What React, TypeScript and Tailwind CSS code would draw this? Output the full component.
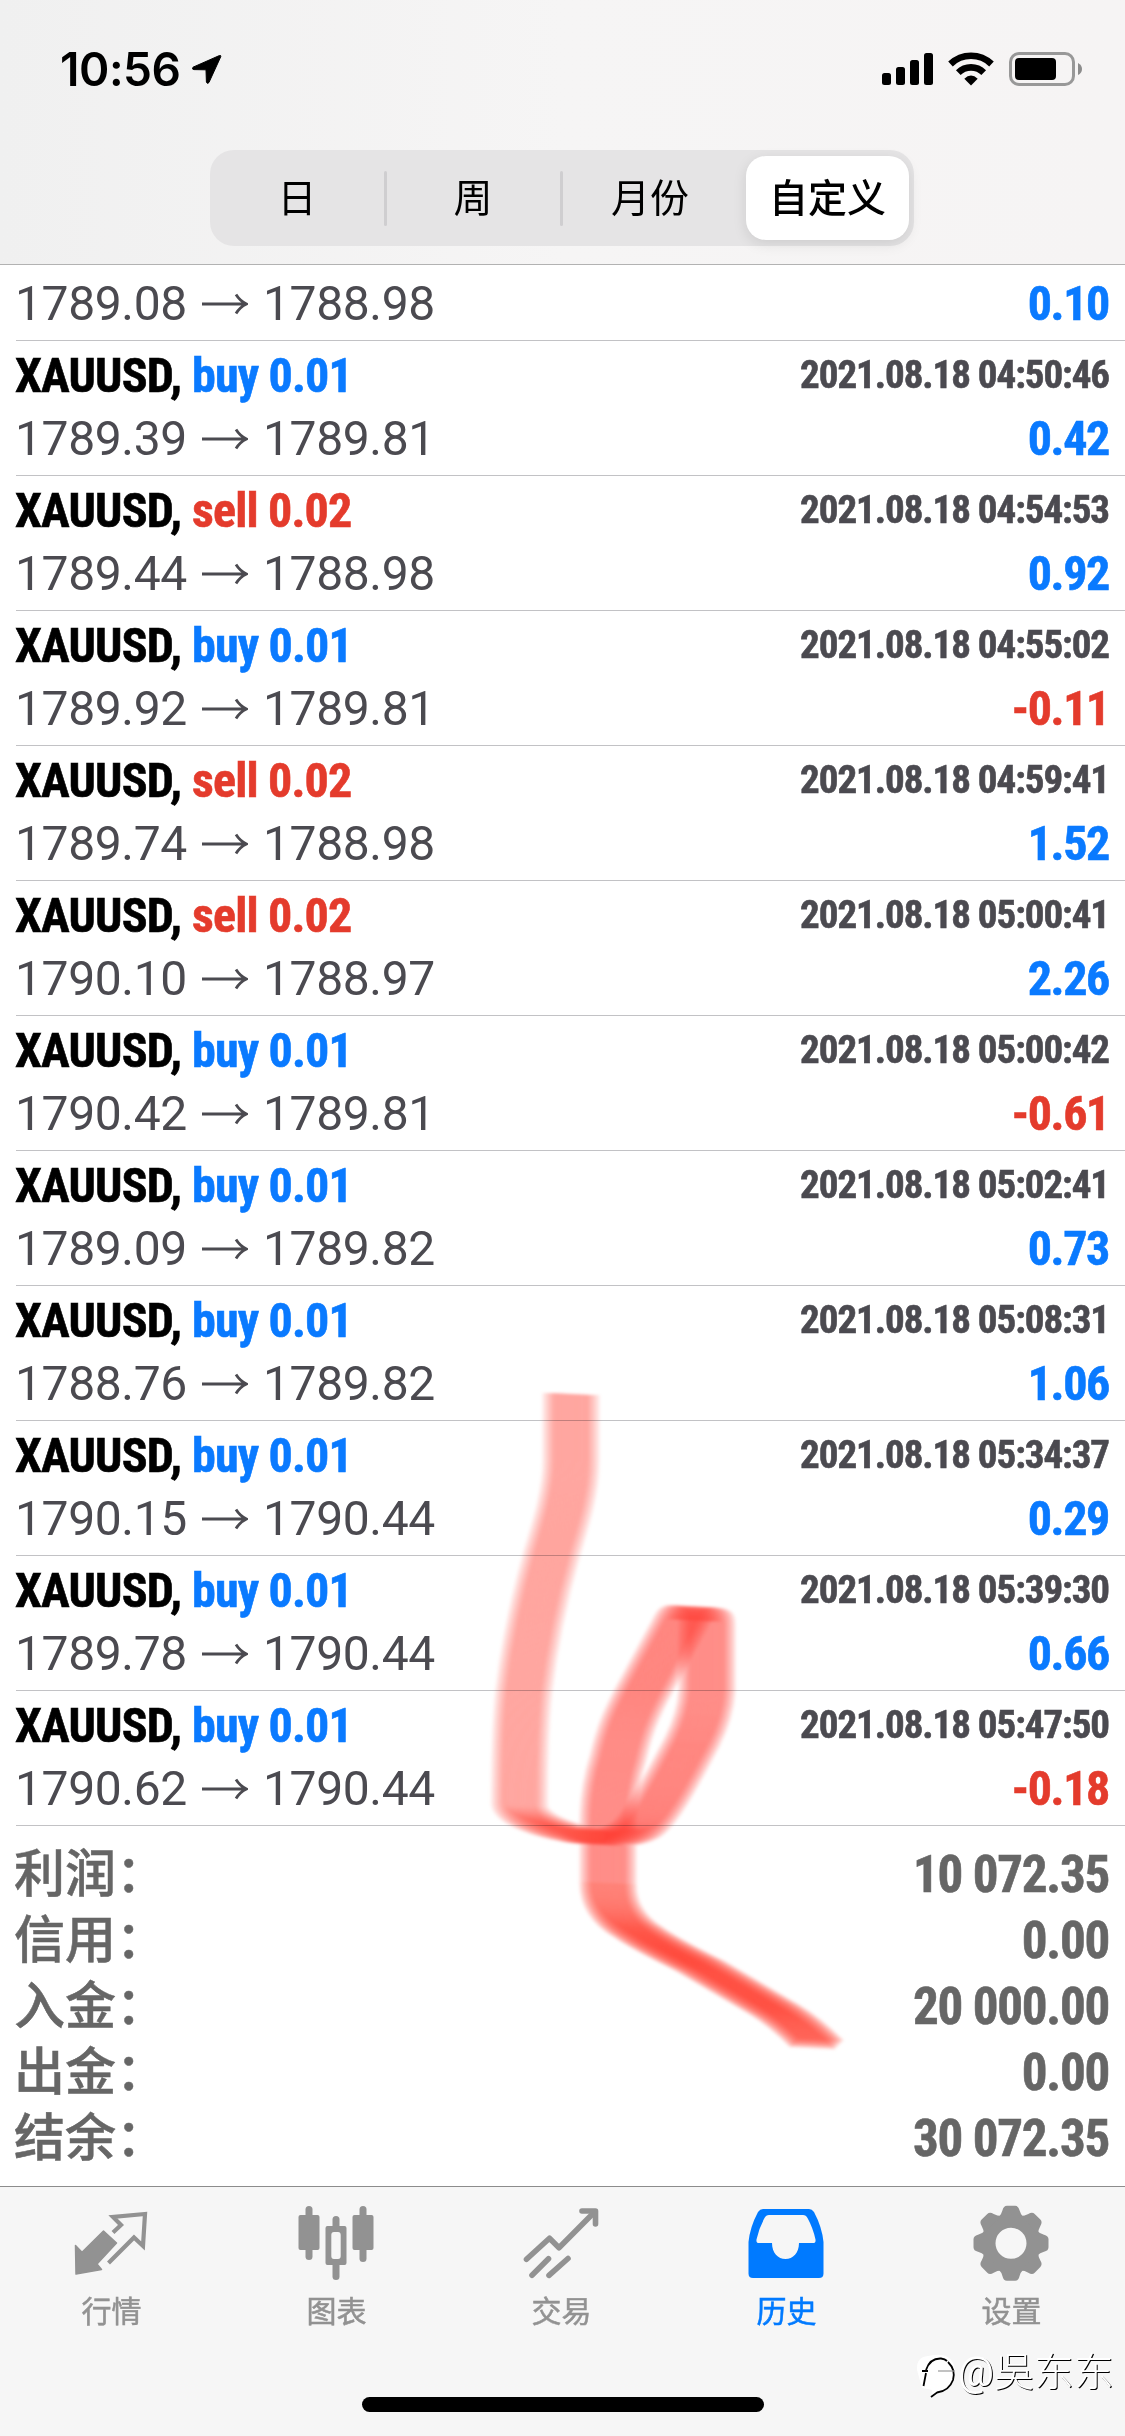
import { ReactNode } from 'react';
import { clsx } from 'clsx';

interface Deal {
  side: 'buy' | 'sell';
  volume: string;
  time: string;
  open: string;
  close: string;
  profit: string;
}

const deals: Deal[] = [
  { side: 'buy', volume: '0.01', time: '2021.08.18 04:50:46', open: '1789.39', close: '1789.81', profit: '0.42' },
  { side: 'sell', volume: '0.02', time: '2021.08.18 04:54:53', open: '1789.44', close: '1788.98', profit: '0.92' },
  { side: 'buy', volume: '0.01', time: '2021.08.18 04:55:02', open: '1789.92', close: '1789.81', profit: '-0.11' },
  { side: 'sell', volume: '0.02', time: '2021.08.18 04:59:41', open: '1789.74', close: '1788.98', profit: '1.52' },
  { side: 'sell', volume: '0.02', time: '2021.08.18 05:00:41', open: '1790.10', close: '1788.97', profit: '2.26' },
  { side: 'buy', volume: '0.01', time: '2021.08.18 05:00:42', open: '1790.42', close: '1789.81', profit: '-0.61' },
  { side: 'buy', volume: '0.01', time: '2021.08.18 05:02:41', open: '1789.09', close: '1789.82', profit: '0.73' },
  { side: 'buy', volume: '0.01', time: '2021.08.18 05:08:31', open: '1788.76', close: '1789.82', profit: '1.06' },
  { side: 'buy', volume: '0.01', time: '2021.08.18 05:34:37', open: '1790.15', close: '1790.44', profit: '0.29' },
  { side: 'buy', volume: '0.01', time: '2021.08.18 05:39:30', open: '1789.78', close: '1790.44', profit: '0.66' },
  { side: 'buy', volume: '0.01', time: '2021.08.18 05:47:50', open: '1790.62', close: '1790.44', profit: '-0.18' },
];

const totals = [
  { label: '利润：', value: '10 072.35' },
  { label: '信用：', value: '0.00' },
  { label: '入金：', value: '20 000.00' },
  { label: '出金：', value: '0.00' },
  { label: '结余：', value: '30 072.35' },
];

const condensed = 'font-["Roboto_Condensed",Roboto,sans-serif] font-bold [-webkit-text-stroke:0.6px_currentColor]';

const StatusBar = () => (
  <div className="flex h-[150px] items-start justify-between pl-[60px] pr-[43px] pt-[52px]">
    <div className="flex items-start gap-[10px]">
      <span className="font-[Inter,sans-serif] text-[46px] leading-[34px] font-semibold tracking-[-0.01em] text-black">
        10:56
      </span>
      <svg className="mt-[2px] h-[31px] w-[31px]" viewBox="0 0 31 31">
        <path
          d="M28.5 1.5 L2 13.2 Q0.6 15.5 3 15.6 L15 15.8 L15.4 28 Q16.3 30.6 18 28.4 L29.8 2.6 Q30 1 28.5 1.5Z"
          fill="#000"
          stroke="#000"
          strokeLinejoin="round"
        />
      </svg>
    </div>
    <div className="flex items-start">
      <svg className="h-[34px] w-[51px]" viewBox="0 0 51 34">
        <rect x="0" y="21" width="9" height="12" rx="2.5" />
        <rect x="14" y="15" width="9" height="18" rx="2.5" />
        <rect x="28" y="8" width="9" height="25" rx="2.5" />
        <rect x="42" y="1" width="9" height="32" rx="2.5" />
      </svg>
      <svg className="ml-[15px] h-[34px] w-[46px]" viewBox="0 0 46 34">
        <g fill="none" stroke="#000" strokeWidth="6.6">
          <path d="M2.5 12 A29.6 29.6 0 0 1 43.5 12" />
          <path d="M10.3 20.6 A18 18 0 0 1 35.7 20.6" />
        </g>
        <path d="M23 33.5 L16.3 26.8 Q23 20 29.7 26.8Z" />
      </svg>
      <svg className="ml-[15px] h-[34px] w-[73px]" viewBox="0 0 73 34">
        <rect x="1.5" y="1.5" width="63" height="31" rx="8.5" fill="none" stroke="#989898" strokeWidth="3" />
        <rect x="6" y="6" width="41" height="22" rx="4" />
        <path d="M69 11 Q73 13 73 17 Q73 21 69 23Z" fill="#8c8c8c" />
      </svg>
    </div>
  </div>
);

const Segment = ({ children, divider }: { children: ReactNode; divider?: boolean }) => (
  <div className="flex h-full w-44 items-center">
    <span className="flex-1 pt-[2px] text-center">{children}</span>
    {divider && <span className="-mr-px h-[55px] w-[3px] rounded-full bg-[#cfced0]" />}
  </div>
);

const Header = () => (
  <header className="h-[265px] border-b border-[#b2b2b2] bg-linear-to-r from-[#f0f0f0] via-[#f6f5f5] to-[#f6f4f4]">
    <StatusBar />
    <div className="ml-[210px] flex h-24 w-[704px] items-center rounded-[24px] bg-[#e5e4e5] text-[39px] leading-none text-black">
      <Segment divider>日</Segment>
      <Segment divider>周</Segment>
      <Segment>月份</Segment>
      <div className="flex w-44 items-center pl-[8px] pr-[5px]">
        <span className="flex h-[84px] flex-1 items-center justify-center rounded-[20px] bg-white pt-[2px] font-medium shadow-[0_4px_14px_rgba(0,0,0,0.1)]">
          自定义
        </span>
      </div>
    </div>
  </header>
);

const Prices = ({ open, close, profit }: Pick<Deal, 'open' | 'close' | 'profit'>) => (
  <div className="flex h-[58px] items-center justify-between text-[48px] leading-[58px]">
    <div className="-ml-px flex items-center tracking-[-0.008em] text-[#4b4a50]">
      <span className="w-[187px]">{open}</span>
      <svg className="w-[46px] h-[22px]" viewBox="0 0 46 22" fill="none" stroke="#4b4a50" strokeWidth="2.8">
        <path d="M0 11 H44 M34 1.5 Q38 8 44.5 11 Q38 14 34 20.5" />
      </svg>
      <span className="ml-[15px]">{close}</span>
    </div>
    <span
      className={clsx(
        condensed,
        'tracking-[-0.028em]',
        profit.startsWith('-') ? 'text-[#e43b2c]' : 'text-[#0a7aff]',
      )}
    >
      {profit}
    </span>
  </div>
);

const DealRow = ({ side, volume, time, ...prices }: Deal) => (
  <div className="ml-4 h-[135px] border-b border-[#c2c2c5] pr-4">
    <div className={clsx('flex h-[69px] items-center justify-between', condensed)}>
      <div className="-ml-px flex text-[48px] leading-[69px]">
        <span className="w-[177px] tracking-[-0.017em] text-black">XAUUSD,</span>
        <span className={clsx('tracking-[-0.017em]', side === 'buy' ? 'text-[#0a7aff]' : 'text-[#e43b2c]')}>
          {side} {volume}
        </span>
      </div>
      <span className="text-[39px] tracking-[-0.027em] text-[#4b4a50]">{time}</span>
    </div>
    <Prices {...prices} />
  </div>
);

const Totals = () => (
  <div className="pl-[14px] pr-4 pt-[16px] text-[51px] leading-[66px] text-[#666]">
    {totals.map(({ label, value }) => (
      <div key={label} className="flex h-[66px] items-center justify-between">
        <span className="font-medium [-webkit-text-stroke:0.5px_#666]">{label}</span>
        <span className={clsx(condensed, 'tracking-[-0.024em]')}>{value}</span>
      </div>
    ))}
  </div>
);

const QuotesIcon = () => (
  <>
    <path
      d="M8.5 45.5 L15 52.3 L36.5 31 L49.5 43 L30 64 L34.5 69.5 L9 74Z"
      fill="currentColor"
      stroke="currentColor"
      strokeWidth="1.5"
      strokeLinejoin="round"
    />
    <path
      d="M46 32.5 L54 25 L46 17 L78 14 L76 46 L67 37.5 L41.5 63"
      fill="none"
      stroke="currentColor"
      strokeWidth="4.2"
    />
  </>
);

const ChartIcon = () => (
  <g fill="currentColor">
    <rect x="6.5" y="15" width="21" height="35" rx="2" />
    <rect x="13.5" y="6" width="7" height="54" rx="3.5" />
    <rect x="60.5" y="15" width="21" height="35" rx="2" />
    <rect x="67.5" y="6" width="7" height="56" rx="3.5" />
    <rect x="40.5" y="16" width="7" height="16" rx="3.5" />
    <rect x="40.5" y="60" width="7" height="20" rx="3.5" />
    <path
      fillRule="evenodd"
      d="M35.5 26 H52.5 Q54.5 26 54.5 28 V63 Q54.5 65 52.5 65 H35.5 Q33.5 65 33.5 63 V28 Q33.5 26 35.5 26Z M42 32 Q39.3 32 39.3 35 V56 Q39.3 59 42 59 H46 Q48.7 59 48.7 56 V35 Q48.7 32 46 32Z"
    />
  </g>
);

const TradeIcon = () => (
  <g fill="none" stroke="currentColor" strokeWidth="5.6" strokeLinecap="round" strokeLinejoin="round">
    <path d="M9.5 59.3 L32.5 38.3 L42 47.7 L77 12.5" />
    <path d="M65 11 H78.5 V24" />
    <path d="M15 75.3 L31.5 58.7 M32 75.3 L51 58.5" />
  </g>
);

const HistoryIcon = () => (
  <path
    fill="currentColor"
    fillRule="evenodd"
    d="M6.5 42 Q8 27 16 12 Q18 9 21 9 H67 Q70 9 72 12 Q80 27 81.5 42 V73.5 Q81.5 78 77 78 H11 Q6.5 78 6.5 73.5Z M22.5 18 Q24 15 27 15 H61 Q64 15 65.5 18 Q71 28 73.5 39.5 Q74 43 71 43 H57 C57 53 51 59 43.5 59 C36 59 30 53 30 43 H17 Q14 43 14.5 39.5 Q17 28 22.5 18Z"
  />
);

const GearIcon = () => (
  <g transform="translate(44 43.3)">
    <circle r="22.3" fill="none" stroke="currentColor" strokeWidth="13.6" />
    {[0, 45, 90, 135, 180, 225, 270, 315].map((angle) => (
      <path
        key={angle}
        transform={`rotate(${angle})`}
        d="M-12.5 -26 Q-9.5 -29 -8.5 -33 Q-7.5 -37.5 -4 -37.5 H4 Q7.5 -37.5 8.5 -33 Q9.5 -29 12.5 -26Z"
        fill="currentColor"
      />
    ))}
  </g>
);

const tabs = [
  { label: '行情', icon: <QuotesIcon /> },
  { label: '图表', icon: <ChartIcon /> },
  { label: '交易', icon: <TradeIcon /> },
  { label: '历史', icon: <HistoryIcon />, active: true },
  { label: '设置', icon: <GearIcon /> },
];

const TabBar = () => (
  <nav className="flex h-[250px] flex-col border-t border-[#8c8c8c] bg-[#f6f6f6]">
    <div className="-ml-px mr-px grid grid-cols-5 pt-[13px]">
      {tabs.map(({ label, icon, active }) => (
        <div key={label} className={clsx('flex flex-col items-center', active ? 'text-[#007aff]' : 'text-[#929292]')}>
          <svg className="h-[90px] w-[90px]" viewBox="0 0 90 90">
            {icon}
          </svg>
          <span className="pt-[2px] text-[30px] leading-[40px] [-webkit-text-stroke:0.5px_currentColor]">{label}</span>
        </div>
      ))}
    </div>
    <div className="mx-auto mb-6 mt-auto h-[15px] w-[402px] rounded-full bg-black" />
  </nav>
);

const nibOffsets = Array.from({ length: 25 }, (_, i) => (i - 12) * 1.85);

// The marker is a wide flat nib, built up from many thin translucent strokes.
// The pen presses lightly on the way down and harder through the loop and tail.
const MarkerStroke = () => (
  <svg
    className="pointer-events-none absolute left-[470px] top-[1380px] mix-blend-multiply blur-[1.5px]"
    width="400"
    height="690"
    viewBox="470 1380 400 690"
    fill="none"
    stroke="#ff3b30"
    strokeWidth="14"
    strokeLinejoin="round"
  >
    {nibOffsets.map((dx) => (
      <g key={dx} transform={`translate(${dx} ${dx * 0.05})`}>
        <path
          strokeOpacity="0.078"
          d="M571 1394 V1461 C571 1490 562 1520 552 1553 C541 1592 530 1640 524 1690 C520 1725 519.5 1760 519.5 1804 C520 1818 550 1830 583 1836"
        />
        <path
          strokeOpacity="0.105"
          d="M583 1836 C600 1839 618 1840 634 1831 C650 1822 672 1780 692 1742 C702 1722 706 1705 707 1690 V1626 C707 1614 706 1614 690 1613 C684 1613 682 1620 677 1629 L644 1690 C630 1716 624 1732 618 1758 C611 1780 608 1800 608 1824 V1883"
        />
        <path
          strokeOpacity="0.13"
          d="M608 1883 C608 1903 618 1920 638 1932 C655 1944 678 1955 700 1966 L775 2010 C790 2019 803 2030 817 2044"
        />
      </g>
    ))}
  </svg>
);

const Watermark = () => (
  <div className="absolute left-[914px] top-[2350px] flex items-start">
    <svg className="h-[52px] w-[44px]" viewBox="0 0 44 52" fill="none">
      <path d="M3 20 Q2 7 14 6 Q40 0 41 22 Q40 40 24 43 L17 49 L18 40 L8 38Z" fill="#fff" />
      <g stroke="#000" strokeWidth="1.8">
        <path d="M12 20 Q16 8 27 8.5 Q31 9 33 11" />
        <path d="M34 12 Q42 20 39 30 Q35 41 23 42.5 L17 47" />
        <path d="M8 21 H14 M12 23 L9.5 36" />
        <path d="M24 21 H41" stroke="#999" strokeWidth="1.2" />
      </g>
    </svg>
    <span className="text-[40px] leading-[46px] text-white text-shadow-[1px_1px_0.5px_#000]">
      @<span className="font-light">吳东东</span>
    </span>
  </div>
);

export default function App() {
  return (
    <div className='relative flex h-[2436px] w-[1125px] flex-col overflow-hidden bg-white font-[Roboto,"Noto_Sans_CJK_SC",sans-serif]'>
      <Header />
      <main className="flex-1">
        <div className="ml-4 h-[76px] border-b border-[#c2c2c5] pr-4 pt-[10px]">
          <Prices open="1789.08" close="1788.98" profit="0.10" />
        </div>
        {deals.map((deal) => (
          <DealRow key={deal.time} {...deal} />
        ))}
        <Totals />
      </main>
      <TabBar />
      <MarkerStroke />
      <Watermark />
    </div>
  );
}
